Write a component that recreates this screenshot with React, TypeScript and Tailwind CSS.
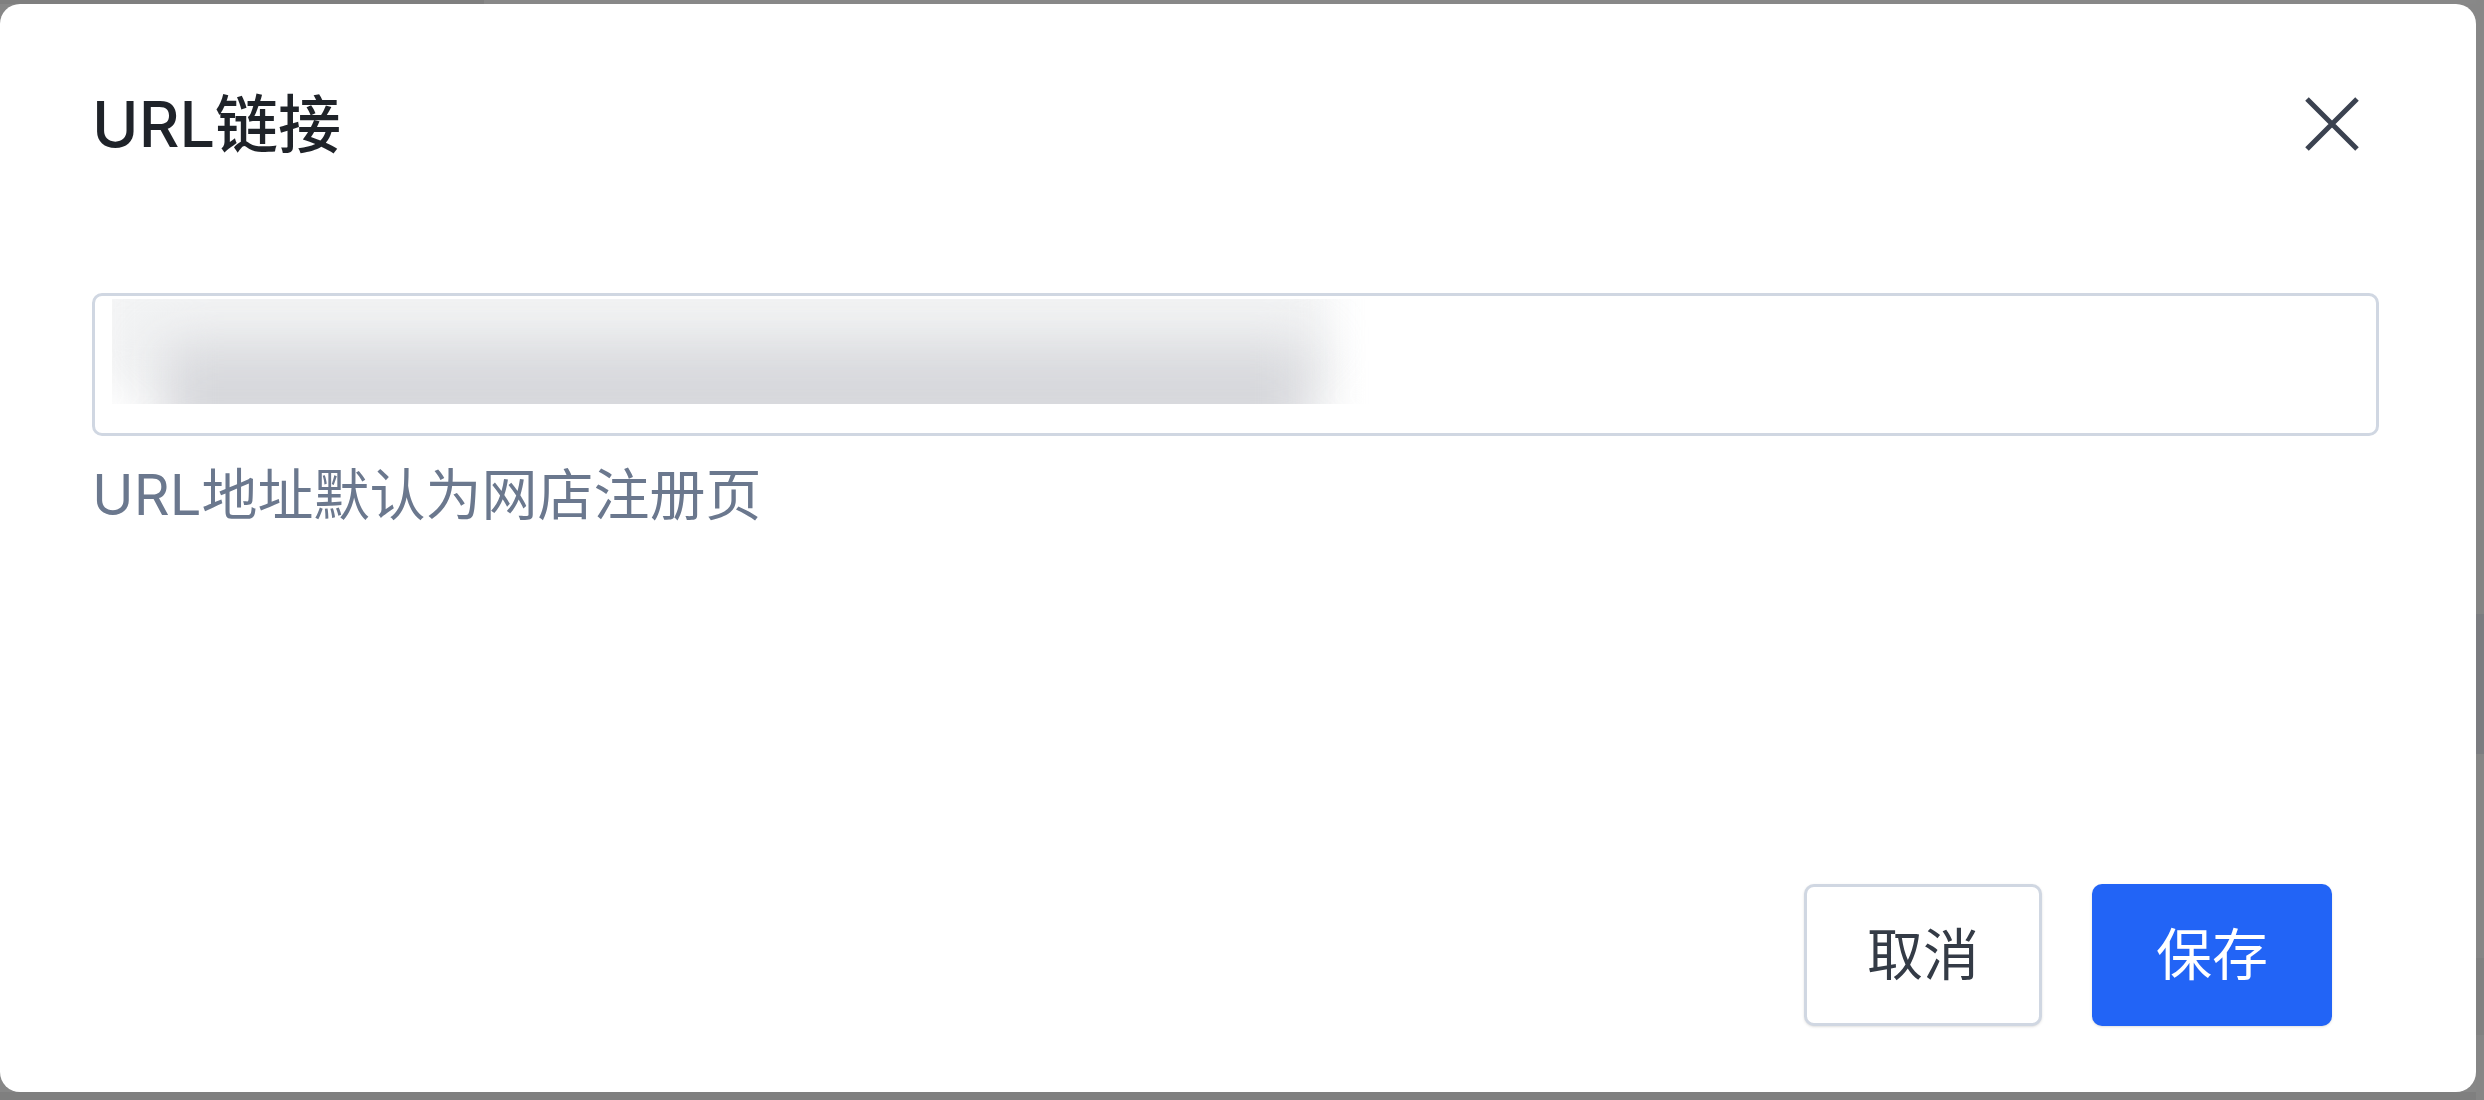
import React from 'react';

const font = '"Inter", "Noto Sans CJK SC", sans-serif';

function CloseIcon() {
	return (
		<svg width="56" height="56" viewBox="0 0 56 56" fill="none" className="mr-[19px] shrink-0">
			<path d="M3 3L53 53M53 3L3 53" stroke="#3b4250" strokeWidth="5" strokeLinecap="butt" />
		</svg>
	);
}

export default function App() {
	return (
		<div className="flex w-[2484px] h-[1100px] bg-[#878787]" style={{ fontFamily: font }}>
			<div className="flex flex-col w-[2476px]">
				<div className="flex h-[4px]">
					<div className="w-[484px] bg-[#7f7f7f]" />
					<div className="flex-1 bg-[#888888]" />
				</div>

				{/* Dialog */}
				<div className="flex flex-col h-[1088px] bg-white rounded-[20px] pl-[92px] pr-[97px]">
					<div className="flex items-center justify-between h-[96px] mt-[72px]">
						<h2 className="text-[63px] leading-none font-medium text-[#1f2329]">URL链接</h2>
						<CloseIcon />
					</div>

					<div className="mt-[121px] h-[143px] border-[3px] border-[#d0d7e2] rounded-[10px] pt-[3px] pl-[17px]">
						{/* blurred url value */}
						<div className="relative w-[1258px] h-[105px] overflow-hidden">
							<div className="absolute left-[-20px] top-[-30px] w-[1240px] h-[120px] bg-[#f2f3f4] blur-[20px]" />
							<div className="absolute left-[50px] top-[45px] w-[1150px] h-[100px] bg-[#d6d7db] blur-[26px]" />
						</div>
					</div>

					<p className="mt-[21px] text-[56px] leading-[76px] text-[#6b788e]">URL地址默认为网店注册页</p>

					<div className="mt-auto mb-[66px] mr-[47px] flex justify-end gap-[50px]">
						<button className="w-[238px] h-[142px] rounded-[10px] border-[3px] border-[#d0d7e2] bg-white text-[56px] text-[#343b46] shadow-sm">
							取消
						</button>
						<button className="w-[240px] h-[142px] rounded-[10px] bg-[#2264f6] text-[56px] text-white shadow-sm">
							保存
						</button>
					</div>
				</div>

				<div className="h-[8px] bg-[#7f7f7f]" />
			</div>

			<div className="flex flex-col w-[8px]">
				<div className="h-[160px] bg-[#878787]" />
				<div className="h-[80px] bg-[#7f7f7f]" />
				<div className="h-[290px] bg-[#878787]" />
				<div className="h-[84px] bg-[#848484]" />
				<div className="h-[140px] bg-[#7b7c80]" />
				<div className="h-[204px] bg-[#868686]" />
				<div className="h-[77px] bg-[#818181]" />
				<div className="flex-1 bg-[#868686]" />
			</div>
		</div>
	);
}
